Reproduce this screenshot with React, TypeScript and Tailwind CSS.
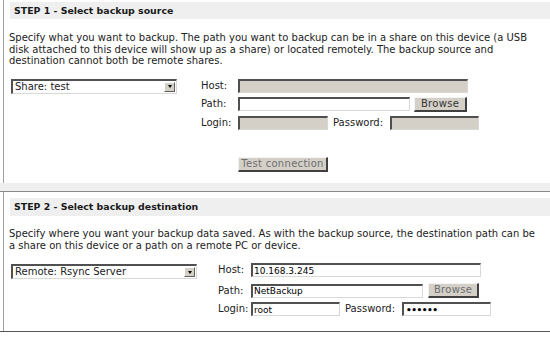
import React from "react";

const inset =
  "border-t-2 border-l-2 border-r border-b border-t-[#505050] border-l-[#505050] border-r-[#d8d8d8] border-b-[#d8d8d8]";

function Input({ className = "", gray = false, value = "" }: { className?: string; gray?: boolean; value?: string }) {
  return (
    <div
      className={`${inset} h-[14px] ${gray ? "bg-[#d4d0c8]" : "bg-white"} flex items-center pl-[1px] text-[9px] leading-[10px] text-black overflow-hidden whitespace-nowrap ${className}`}
    >
      {value}
    </div>
  );
}

function Button({ className = "", label, dim = false }: { className?: string; label: string; dim?: boolean }) {
  return (
    <div
      className={`h-[15px] bg-[#d4d0c8] border-t border-l border-r-2 border-b-2 border-t-[#f4f4f4] border-l-[#f4f4f4] border-r-[#404040] border-b-[#404040] flex items-center justify-center text-[10px] leading-[10px] tracking-[0.3px] ${dim ? "text-[#6e6e6e]" : "text-[#333]"} ${className}`}
    >
      {label}
    </div>
  );
}

function Select({ className = "", text }: { className?: string; text: string }) {
  return (
    <div className={`${inset} h-[15px] bg-white flex items-center justify-between pl-[2px] pr-[1px] ${className}`}>
      <span className="text-[10px] leading-[10px] text-[#222] whitespace-nowrap">{text}</span>
      <div className="w-[11px] h-[10px] bg-[#d4d0c8] border-t border-l border-r border-b border-t-white border-l-white border-r-[#606060] border-b-[#606060] flex items-center justify-center">
        <div className="w-0 h-0 border-l-[2.5px] border-r-[2.5px] border-t-[3px] border-l-transparent border-r-transparent border-t-black" />
      </div>
    </div>
  );
}

export default function App() {
  return (
    <div className="w-[550px] h-[337px] bg-white overflow-hidden text-[#222] font-['DejaVu_Sans',Verdana,sans-serif] text-[10px]">
      {/* STEP 1 */}
      <div className="ml-[3px] h-[183px] border-l border-[#a0a0a0] pl-[5px] pt-[2px]">
        <div className="ml-[1px] h-[17px] bg-[#efefef] pl-[4px] font-bold text-[9.4px] leading-[17px] text-[#1a1a1a] whitespace-nowrap">
          STEP 1 - Select backup source
        </div>
        <p className="mt-[13px] leading-[11.6px] whitespace-nowrap">
          Specify what you want to backup. The path you want to backup can be in a share on this device (a USB
          <br />
          disk attached to this device will show up as a share) or located remotely. The backup source and
          <br />
          destination cannot both be remote shares.
        </p>
        <div className="mt-[12px] flex items-start">
          <Select className="ml-[2px] w-[166px]" text="Share: test" />
          <div className="ml-[24px] flex flex-col items-start">
            <div className="flex items-center h-[14px]">
              <span className="w-[37px] leading-[10px]">Host:</span>
              <Input className="w-[230px]" gray />
            </div>
            <div className="mt-[4px] flex items-center h-[15px]">
              <span className="w-[37px] leading-[10px]">Path:</span>
              <Input className="w-[172px]" />
              <Button className="ml-[4px] w-[53px]" label="Browse" />
            </div>
            <div className="mt-[4px] flex items-center h-[14px]">
              <span className="w-[37px] leading-[10px]">Login:</span>
              <Input className="w-[90px]" gray />
              <span className="ml-[5px] w-[57px] leading-[10px]">Password:</span>
              <Input className="w-[89px]" gray />
            </div>
            <Button className="mt-[27px] ml-[37px] w-[90px]" label="Test connection" dim />
          </div>
        </div>
      </div>
      <div className="h-[8px] bg-[#efefef]" />
      {/* STEP 2 */}
      <div className="h-[141px] border-t border-b border-t-[#8a8a8a] border-b-[#555]">
        <div className="ml-[3px] h-full border-l border-[#a0a0a0] pl-[5px] pt-[6px]">
          <div className="ml-[1px] h-[18px] bg-[#efefef] pl-[4px] font-bold text-[9.4px] leading-[18px] text-[#1a1a1a] whitespace-nowrap">
            STEP 2 - Select backup destination
          </div>
          <p className="mt-[12px] leading-[12px] whitespace-nowrap">
            Specify where you want your backup data saved. As with the backup source, the destination path can be
            <br />
            a share on this device or a path on a remote PC or device.
          </p>
          <div className="mt-[11px] flex items-start">
            <Select className="mt-[1px] ml-[2px] w-[186px]" text="Remote: Rsync Server" />
            <div className="ml-[21px] flex flex-col">
              <div className="flex items-center h-[14px]">
                <span className="w-[33px] leading-[10px]">Host:</span>
                <Input className="w-[230px]" value="10.168.3.245" />
              </div>
              <div className="mt-[6px] flex items-center h-[15px]">
                <span className="w-[33px] leading-[10px]">Path:</span>
                <Input className="w-[172px]" value="NetBackup" />
                <Button className="ml-[5px] w-[51px]" label="Browse" dim />
              </div>
              <div className="mt-[4px] flex items-center h-[14px]">
                <span className="w-[33px] leading-[10px]">Login:</span>
                <Input className="w-[89px]" value="root" />
                <span className="ml-[5px] w-[57px] leading-[10px]">Password:</span>
                <Input className="w-[89px] pl-[2px] text-[9px] font-bold tracking-[-0.5px]" value="••••••" />
              </div>
            </div>
          </div>
        </div>
      </div>
    </div>
  );
}
